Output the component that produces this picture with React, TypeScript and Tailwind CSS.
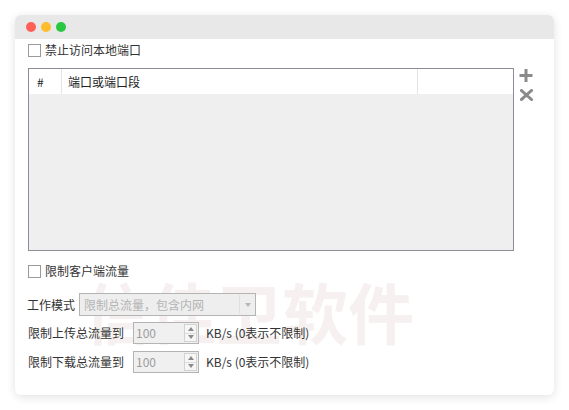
import React from "react";

const font = { fontFamily: '"Noto Sans CJK SC", "Noto Sans", sans-serif' };

function Checkbox({ label }: { label: string }) {
  return (
    <div className="flex items-center h-[20px]">
      <div className="w-[13px] h-[13px] border border-[#9a9a9a] bg-white" />
      <span className="ml-[4px] text-[12px] text-[#333] leading-none">{label}</span>
    </div>
  );
}

function Spin({ value }: { value: string }) {
  return (
    <div className="w-[66px] h-[22px] border border-[#b4b4b4] bg-[#f0f0f0] flex items-center pl-[2px] pr-[1px]">
      <span className="text-[12px] text-[#9c9c9c] leading-none flex-1">{value}</span>
      <div className="w-[13px] h-[18px] border border-[#d2d2d2] bg-[#f6f6f6] flex flex-col">
        <div className="flex-1 flex items-center justify-center border-b border-[#dcdcdc]">
          <svg width="6" height="4" viewBox="0 0 6 4"><path d="M0 4 L3 0 L6 4Z" fill="#8a8a8a" /></svg>
        </div>
        <div className="flex-1 flex items-center justify-center">
          <svg width="6" height="4" viewBox="0 0 6 4"><path d="M0 0 L3 4 L6 0Z" fill="#8a8a8a" /></svg>
        </div>
      </div>
    </div>
  );
}

export default function App() {
  return (
    <div className="w-[569px] h-[410px] bg-white pt-[15px] pl-[15px]" style={font}>
      <div className="relative w-[539px] h-[380px] bg-white rounded-[6px] overflow-hidden shadow-[0_2px_10px_rgba(0,0,0,0.12)]">
        <div
          className="absolute left-[69px] top-[262px] text-[66px] font-bold leading-none text-[#f6f0f0] tracking-[0px] whitespace-nowrap select-none"
        >
          信佳卫软件
        </div>
        <div className="h-[24px] bg-[#e8e8e8] flex items-center pl-[11px] gap-[5px]">
          <div className="w-[10px] h-[10px] rounded-full bg-[#fe5f57]" />
          <div className="w-[10px] h-[10px] rounded-full bg-[#febc2e]" />
          <div className="w-[10px] h-[10px] rounded-full bg-[#28c840]" />
        </div>
        <div className="relative pl-[13px] pt-[1px]">
          <Checkbox label="禁止访问本地端口" />
          <div className="flex mt-[8px]">
            <div className="w-[486px] h-[183px] border border-[#8b8e98] bg-[#efefef] flex flex-col">
              <div className="h-[25px] bg-white flex text-[12px] text-[#222]">
                <div className="w-[33px] pl-[8px] flex items-center border-r border-[#e4e4e4]">#</div>
                <div className="w-[356px] pl-[6px] flex items-center border-r border-[#e4e4e4]">端口或端口段</div>
                <div className="flex-1" />
              </div>
            </div>
            <div className="ml-[5px] pt-[1px] flex flex-col items-center gap-[7px]">
              <svg width="14" height="13" viewBox="0 0 14 13">
                <path d="M5.5 0h3v5h5v3h-5v5h-3v-5h-5v-3h5z" fill="#8a8a8a" />
              </svg>
              <svg width="13" height="12" viewBox="0 0 13 12">
                <path d="M1.5 1.5 L11.5 10.5 M11.5 1.5 L1.5 10.5" stroke="#8a8a8a" strokeWidth="3" strokeLinecap="square" />
              </svg>
            </div>
          </div>
          <div className="mt-[10px]">
            <Checkbox label="限制客户端流量" />
          </div>
          <div className="flex items-center mt-[12px]">
            <span className="text-[12px] text-[#333] w-[52px] -ml-[1px]">工作模式</span>
            <div className="w-[177px] h-[23px] border border-[#b4b4b4] bg-[#eeeeee] flex items-center">
              <span className="pl-[4px] flex-1 text-[12px] text-[#b4b4b4] leading-none">限制总流量，包含内网</span>
              <div className="w-[16px] h-[19px] border-l border-[#e0e0e0] flex items-center justify-center">
                <svg width="6" height="4" viewBox="0 0 6 4"><path d="M0 0 L3 4 L6 0Z" fill="#b8b8b8" /></svg>
              </div>
            </div>
          </div>
          <div className="flex items-center mt-[6px]">
            <span className="text-[12px] text-[#333] w-[105px]">限制上传总流量到</span>
            <Spin value="100" />
            <span className="ml-[7px] text-[12px] text-[#333]">KB/s (0表示不限制)</span>
          </div>
          <div className="flex items-center mt-[7px]">
            <span className="text-[12px] text-[#333] w-[105px]">限制下载总流量到</span>
            <Spin value="100" />
            <span className="ml-[7px] text-[12px] text-[#333]">KB/s (0表示不限制)</span>
          </div>
        </div>
      </div>
    </div>
  );
}
